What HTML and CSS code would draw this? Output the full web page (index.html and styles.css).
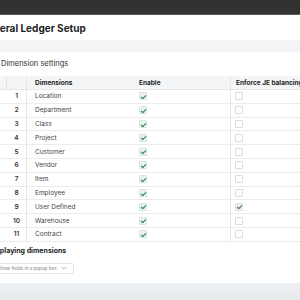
FILE: index.html
```html
<!DOCTYPE html>
<html>
<head>
<meta charset="utf-8">
<link rel="stylesheet" href="styles.css">
</head>
<body>
<div class="page">
  <div class="topbar"></div>
  <div class="titlebar"><h1 class="title">General Ledger Setup</h1></div>
  <div class="band"></div>
  <div class="content">
    <div class="section-title">Dimension settings</div>
    <div class="table">
      <div class="row head">
        <div class="c0"></div>
        <div class="cnum"></div>
        <div class="cdim">Dimensions</div>
        <div class="cen">Enable</div>
        <div class="cjf">Enforce JE balancing</div>
      </div>
      <div class="row"><div class="c0"></div><div class="cnum">1</div><div class="cdim">Location</div><div class="cen"><span class="cb on"></span></div><div class="cjf"><span class="cb"></span></div></div>
      <div class="row"><div class="c0"></div><div class="cnum">2</div><div class="cdim">Department</div><div class="cen"><span class="cb on"></span></div><div class="cjf"><span class="cb"></span></div></div>
      <div class="row"><div class="c0"></div><div class="cnum">3</div><div class="cdim">Class</div><div class="cen"><span class="cb on"></span></div><div class="cjf"><span class="cb"></span></div></div>
      <div class="row"><div class="c0"></div><div class="cnum">4</div><div class="cdim">Project</div><div class="cen"><span class="cb on"></span></div><div class="cjf"><span class="cb"></span></div></div>
      <div class="row"><div class="c0"></div><div class="cnum">5</div><div class="cdim">Customer</div><div class="cen"><span class="cb on"></span></div><div class="cjf"><span class="cb"></span></div></div>
      <div class="row"><div class="c0"></div><div class="cnum">6</div><div class="cdim">Vendor</div><div class="cen"><span class="cb on"></span></div><div class="cjf"><span class="cb"></span></div></div>
      <div class="row"><div class="c0"></div><div class="cnum">7</div><div class="cdim">Item</div><div class="cen"><span class="cb on"></span></div><div class="cjf"><span class="cb"></span></div></div>
      <div class="row"><div class="c0"></div><div class="cnum">8</div><div class="cdim">Employee</div><div class="cen"><span class="cb on"></span></div><div class="cjf"><span class="cb"></span></div></div>
      <div class="row"><div class="c0"></div><div class="cnum">9</div><div class="cdim">User Defined</div><div class="cen"><span class="cb on"></span></div><div class="cjf"><span class="cb on grey"></span></div></div>
      <div class="row"><div class="c0"></div><div class="cnum">10</div><div class="cdim">Warehouse</div><div class="cen"><span class="cb on"></span></div><div class="cjf"><span class="cb"></span></div></div>
      <div class="row"><div class="c0"></div><div class="cnum">11</div><div class="cdim">Contract</div><div class="cen"><span class="cb on"></span></div><div class="cjf"><span class="cb"></span></div></div>
    </div>
    <div class="sub-title">Displaying dimensions</div>
    <div class="select">
      <span class="select-text">Show fields in a popup box</span>
      <svg class="chev" viewBox="0 0 10 6" width="6" height="4"><path d="M1 1 L5 5 L9 1" fill="none" stroke="#8a8f95" stroke-width="1.2"/></svg>
    </div>
  </div>
  <div class="footer"></div>
</div>
</body>
</html>
```

FILE: styles.css
```css
html, body {
  margin: 0;
  padding: 0;
  background: #ffffff;
}
body {
  width: 300px;
  height: 300px;
  overflow: hidden;
  font-family: Inter, "Noto Sans", sans-serif;
  color: #333;
}
.page {
  display: flex;
  flex-direction: column;
  height: 300px;
}
.topbar {
  height: 15px;
  background: #323232;
  border-bottom: 1px solid #5a5a5a;
  box-sizing: border-box;
}
.titlebar {
  height: 25px;
  display: flex;
  align-items: center;
}
.title {
  margin: 0 0 0 -20px;
  font-size: 10px;
  font-weight: 700;
  color: #222;
  white-space: nowrap;
}
.band {
  height: 12px;
  background: #f2f4f6;
}
.content {
  display: flex;
  flex-direction: column;
  flex: 1;
}
.section-title {
  height: 24px;
  line-height: 24px;
  font-size: 7.5px;
  color: #333;
  padding-left: 1px;
}
.table {
  width: 340px;
  font-size: 6.5px;
}
.row {
  display: grid;
  grid-template-columns: 7px 20px 104px 100px 1fr;
  height: 13.8px;
  align-items: stretch;
  border-bottom: 1px solid #ececec;
  box-sizing: border-box;
}
.row > div {
  display: flex;
  align-items: center;
  white-space: nowrap;
}
.row.head {
  height: 14px;
  background: #f4f5f6;
  font-weight: 700;
  color: #222;
  border-bottom: 1px solid #e6e6e6;
}
.row.head .c0 {
  border-right: 1px solid #e2e2e2;
}
.cnum {
  justify-content: center;
  border-right: 1px solid #e6e6e6;
  font-weight: 600;
  color: #333;
}
.cdim {
  padding-left: 8px;
  color: #444;
}
.cen {
  padding-left: 8px;
  border-right: 1px solid #e6e6e6;
}
.cjf {
  padding-left: 4px;
}
.row.head .cjf {
  padding-left: 5px;
}
.row.head .cdim {
  color: #222;
}
.cb {
  display: inline-block;
  width: 8px;
  height: 8px;
  box-sizing: border-box;
  border: 1px solid #dcdcdc;
  border-radius: 1px;
  background: #fff;
  position: relative;
}
.cb.on {
  background: #e8f4ec;
  border-color: #d5e9db;
}
.cb.on.grey {
  background: #eef0f0;
  border-color: #e0e2e2;
}
.cb.on::after {
  content: "";
  position: absolute;
  left: 2.2px;
  top: 0.6px;
  width: 2px;
  height: 4px;
  border-right: 1.2px solid #2f7d4f;
  border-bottom: 1.2px solid #2f7d4f;
  transform: rotate(45deg);
}
.sub-title {
  margin-left: -11px;
  height: 17px;
  line-height: 17px;
  font-size: 7px;
  font-weight: 700;
  color: #222;
  white-space: nowrap;
}
.select {
  align-self: flex-start;
  margin-left: -7px;
  margin-top: 4px;
  height: 11px;
  box-sizing: border-box;
  border: 1px solid #e4e4e4;
  border-radius: 2px;
  display: flex;
  align-items: center;
  gap: 4px;
  padding: 0 6px 0 4px;
  font-size: 4.6px;
  color: #888;
}
.select-text {
  white-space: nowrap;
}
.chev {
  display: block;
  flex: none;
}
.footer {
  height: 17px;
  background: linear-gradient(#eef1f4, #e8ebee);
}
```
